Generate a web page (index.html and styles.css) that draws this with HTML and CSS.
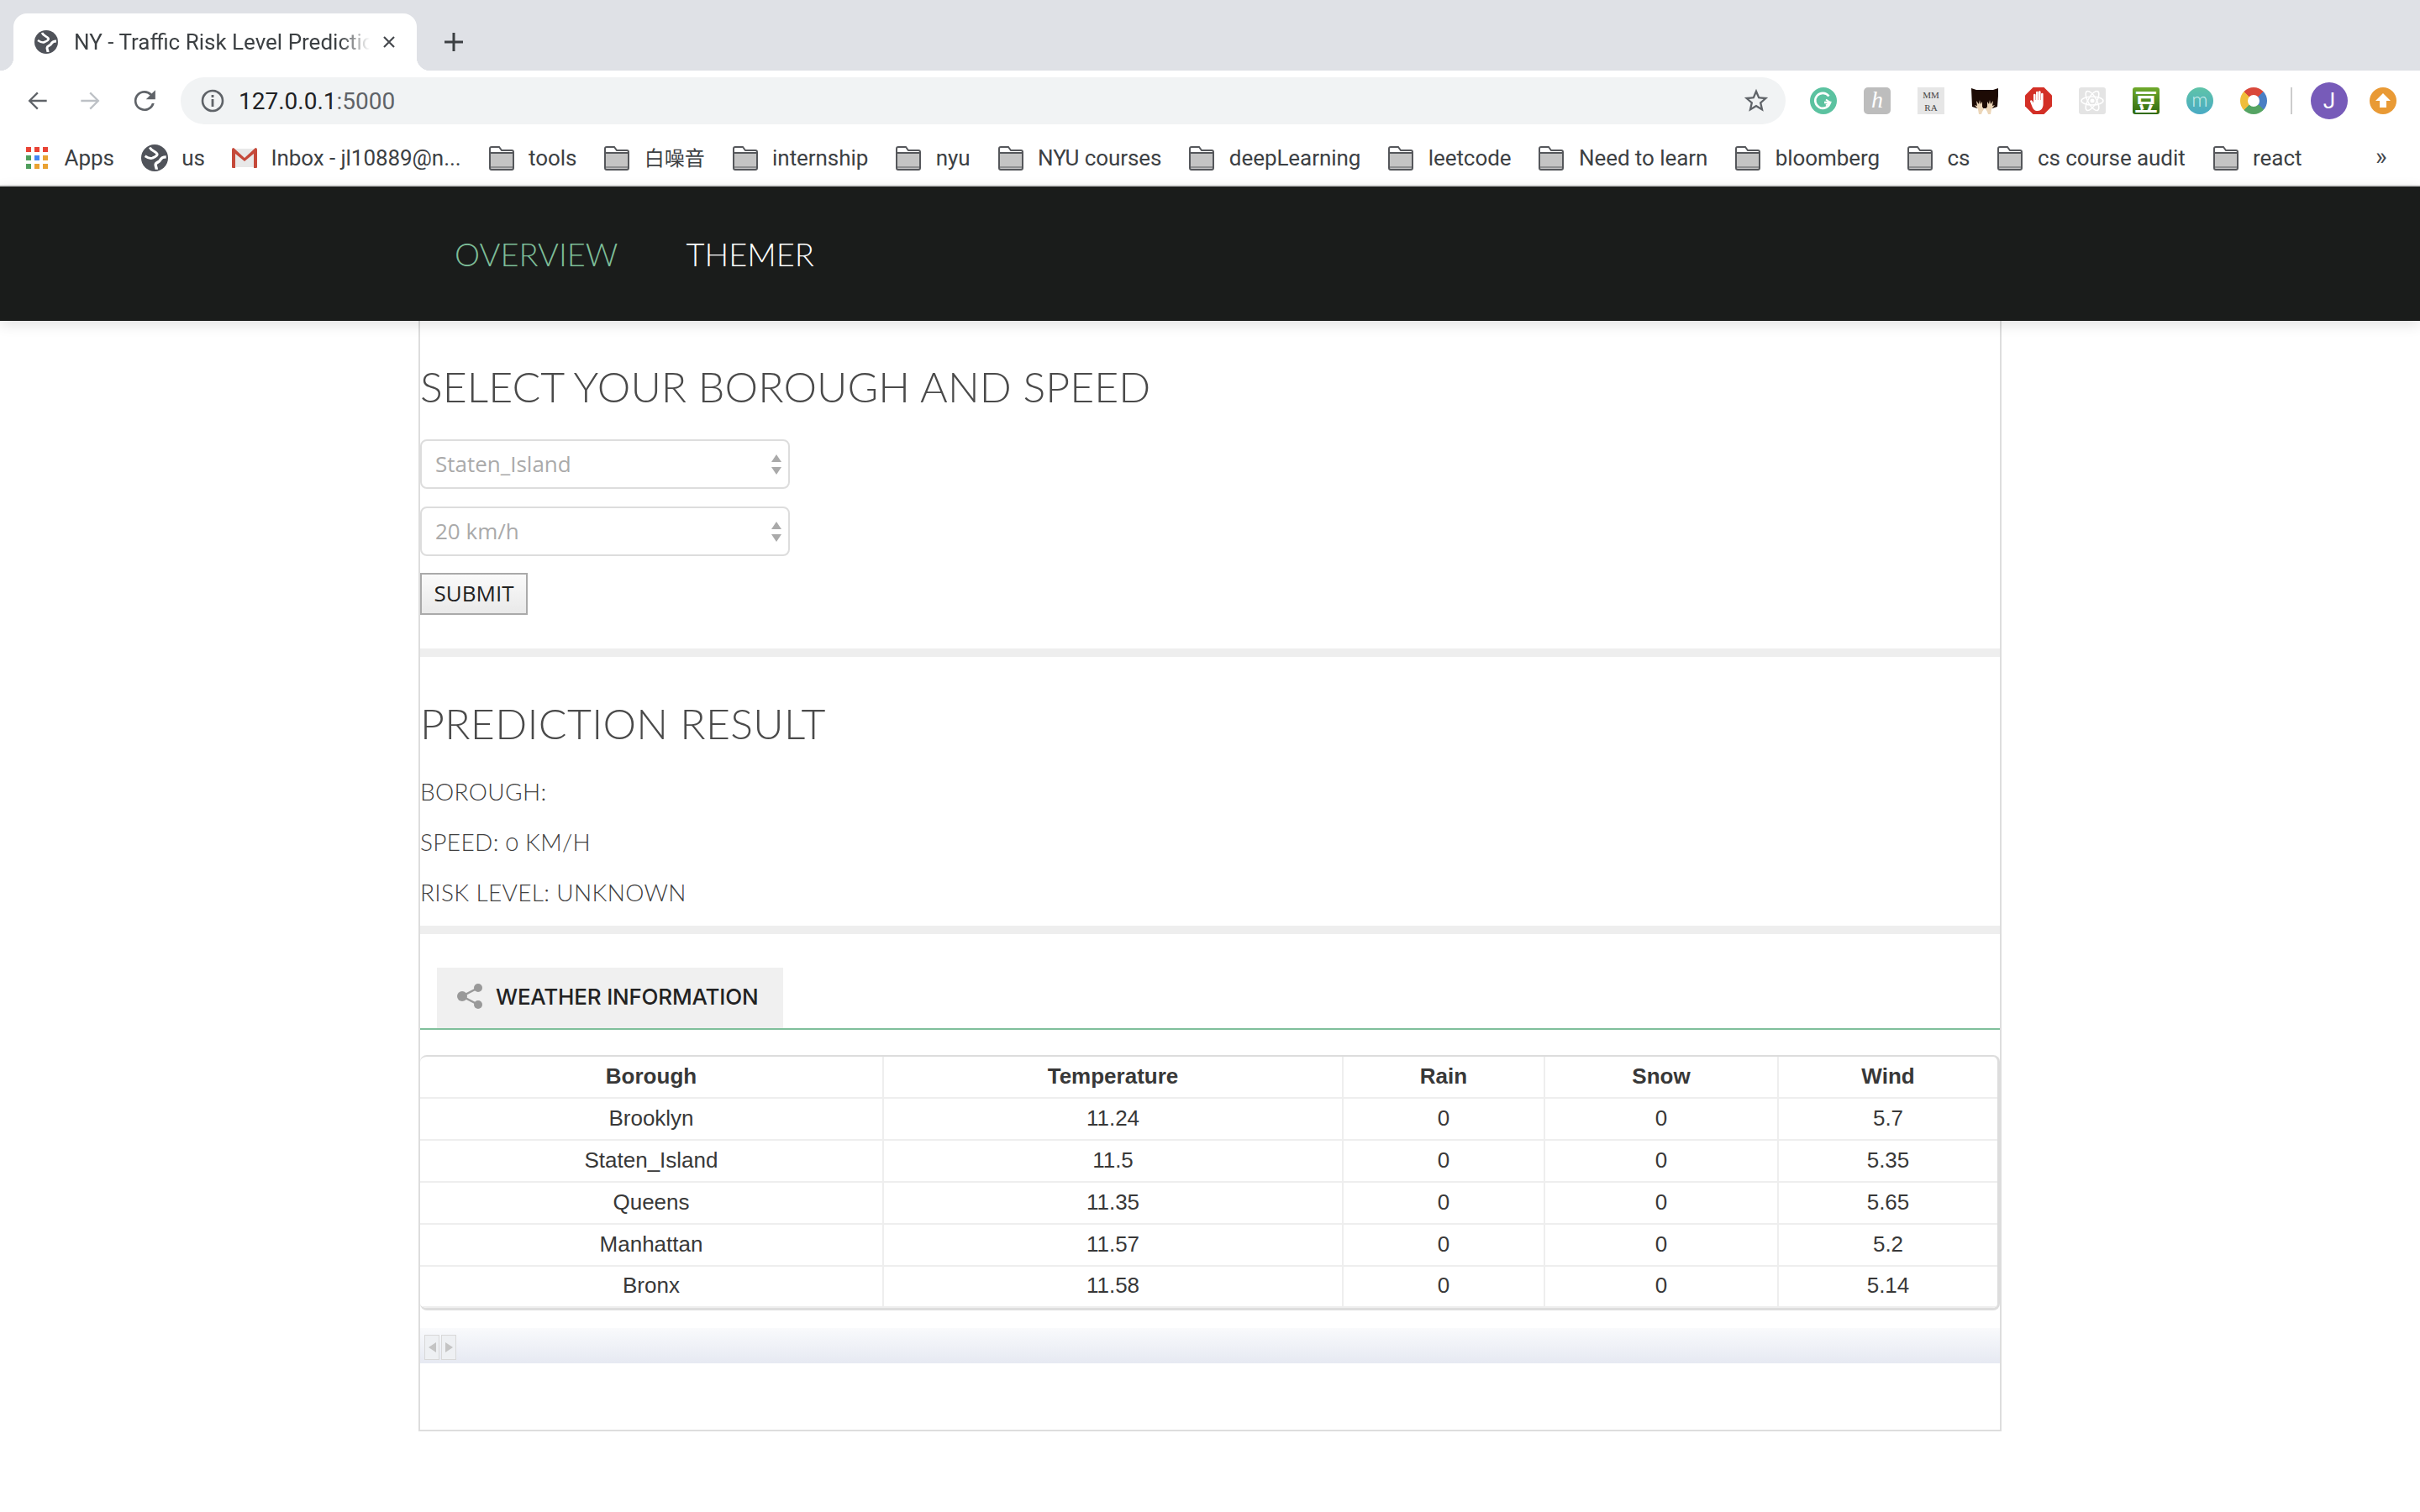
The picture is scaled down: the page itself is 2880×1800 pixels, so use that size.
FILE: index.html
```html
<!DOCTYPE html>
<html lang="en">
<head>
    <meta charset="UTF-8">
    <meta name="viewport" content="width=device-width, initial-scale=1.0">
    <title>NY - Traffic Risk Level Prediction</title>
    <link rel="stylesheet" href="styles.css">
</head>
<body>
    <svg class="defs" width="0" height="0">
        <symbol id="globe" viewBox="0 0 28 28">
            <circle cx="14" cy="14" r="14" fill="#50535a"/>
            <path d="M9 3c1 3 5 4 7 6 2 2-1 4-4 5-2 1-5 0-8-2" fill="none" stroke="#fff" stroke-width="2.6"/>
            <path d="M26 13c-3 0-5 1-6 3-1 3-5 2-5 5 0 2 1 3 1 5" fill="none" stroke="#fff" stroke-width="3"/>
        </symbol>
        <symbol id="folder" viewBox="0 0 32 32">
            <path d="M2 5q0-2 2-2h9l3 4h12q2 0 2 2v19q0 2-2 2H4q-2 0-2-2z" fill="#c4c4c4"/>
            <path d="M2 5q0-2 2-2h9l3 4h14v4H2z" fill="#fff"/>
            <path d="M2 26h28v2H2z" fill="#8e8f91"/>
            <path d="M2 5q0-2 2-2h9l3 4h12q2 0 2 2v19q0 2-2 2H4q-2 0-2-2zM2 10h28" fill="none" stroke="#55575b" stroke-width="2"/>
        </symbol>
    </svg>

    <header class="browser">
        <div class="tabstrip">
            <div class="tab">
                <svg class="tab-icon"><use href="#globe"/></svg>
                <span class="tab-title">NY - Traffic Risk Level Prediction</span>
                <svg class="tab-close" viewBox="0 0 16 16"><path d="M2 2l12 12M14 2L2 14" stroke="#45484d" stroke-width="2.2"/></svg>
            </div>
            <svg class="new-tab" viewBox="0 0 24 24"><path d="M12 1v22M1 12h22" stroke="#3c4043" stroke-width="3"/></svg>
        </div>

        <div class="toolbar">
            <svg class="nav-btn" viewBox="0 0 24 24"><path fill="#5f6368" d="M22 11H6.8l6.6-6.6L12 3l-9 9 9 9 1.4-1.4L6.8 13H22z"/></svg>
            <svg class="nav-btn" viewBox="0 0 24 24"><path fill="#bdc1c6" d="M2 11h15.2l-6.6-6.6L12 3l9 9-9 9-1.4-1.4 6.6-6.6H2z"/></svg>
            <svg class="nav-btn" viewBox="0 0 24 24"><path fill="#5f6368" d="M19.3 4.7A10.4 10.4 0 0 0 12 1.7C6.2 1.700 1.600 6.300 1.600 12S6.200 22.300 12 22.300c4.800 0 8.900-3.300 10-7.800h-2.500a8 8 0 1 1-1.900-8.100L13.500 10.500H23V1z"/></svg>
            <div class="omnibox">
                <svg class="info" viewBox="0 0 28 28"><circle cx="14" cy="14" r="12" fill="none" stroke="#5f6368" stroke-width="2.6"/><path d="M12.600 12h2.800v9h-2.800zM12.600 7h2.800v3h-2.800z" fill="#5f6368"/></svg>
                <span class="url">127.0.0.1<span class="url-port">:5000</span></span>
                <svg class="star" viewBox="0 0 24 24"><path fill="#5f6368" d="M22 9.240l-7.190-.62L12 2 9.190 8.630 2 9.240l5.460 4.730L5.820 21 12 17.270 18.180 21l-1.630-7.030L22 9.240zM12 15.400l-3.760 2.270 1-4.280-3.320-2.880 4.380-.38L12 6.100l1.710 4.040 4.380.38-3.320 2.880 1 4.280L12 15.400z"/></svg>
            </div>
            <div class="extensions">
                <svg class="ext" viewBox="0 0 32 32"><circle cx="16" cy="16" r="16" fill="#5bc2a0"/><path d="M22.500 10.500A9 9 0 1 0 24 18h-7" fill="none" stroke="#fff" stroke-width="2.600"/><path d="M19 14.500l5 3.500-5 3.500" fill="none" stroke="#fff" stroke-width="2"/></svg>
                <div class="ext ext-h">h</div>
                <div class="ext ext-mm">MM<br>RA</div>
                <svg class="ext" viewBox="0 0 32 32">
                    <path d="M0 1l6 2h20l6-2v9l-1 13-6 2H7l-6-2z" fill="#1d0b05"/>
                    <path d="M9 32l-1-6-4-5 3 1-1-6 3 4 1-5 1 5 2-3 0 6 2 3-2 3-1 3zM23 32l1-6 4-5-3 1 1-6-3 4-1-5-1 5-2-3 0 6-2 3 2 3 1 3z" fill="#ecd6b8"/>
                </svg>
                <svg class="ext" viewBox="0 0 32 32">
                    <path d="M9.500 0h13L32 9.500v13L22.500 32h-13L0 22.500v-13z" fill="#d32f26"/>
                    <path d="M10 9a1.300 1.300 0 0 1 2.600 0v6h.4V6a1.300 1.300 0 0 1 2.600 0v9h.4V5.500a1.300 1.300 0 0 1 2.600 0V15h.4V8a1.300 1.300 0 0 1 2.600 0v12c0 5-3 8-6.500 8-4 0-5.500-2-7-6l-2-5c-.5-1.500 1.500-2.500 2.400-1l1.500 2.500z" fill="#fff"/>
                </svg>
                <svg class="ext" viewBox="0 0 32 32">
                    <rect width="32" height="32" rx="3" fill="#e4e4e4"/>
                    <g fill="none" stroke="#fff" stroke-width="1.500">
                        <ellipse cx="16" cy="16" rx="13" ry="5"/>
                        <ellipse cx="16" cy="16" rx="13" ry="5" transform="rotate(60 16 16)"/>
                        <ellipse cx="16" cy="16" rx="13" ry="5" transform="rotate(120 16 16)"/>
                    </g>
                    <circle cx="16" cy="16" r="2.500" fill="#fff"/>
                </svg>
                <div class="ext ext-dou">豆</div>
                <div class="ext ext-m">m</div>
                <div class="ext ext-chrome"></div>
            </div>
            <div class="toolbar-sep"></div>
            <div class="avatar">J</div>
            <svg class="ext" viewBox="0 0 32 32"><circle cx="16" cy="16" r="16" fill="#e99a35"/><path d="M16 7l9 9h-5v8h-8v-8H7z" fill="#fff"/></svg>
        </div>

        <div class="bookmarks">
            <div class="bm">
                <svg class="bm-apps" viewBox="0 0 26 26">
                    <rect width="6" height="6" fill="#e94335"/><rect x="10" width="6" height="6" fill="#e94335"/><rect x="20" width="6" height="6" fill="#e94335"/>
                    <rect y="10" width="6" height="6" fill="#4f9e5c"/><rect x="10" y="10" width="6" height="6" fill="#4285f4"/><rect x="20" y="10" width="6" height="6" fill="#eaa233"/>
                    <rect y="20" width="6" height="6" fill="#4f9e5c"/><rect x="10" y="20" width="6" height="6" fill="#eaa233"/><rect x="20" y="20" width="6" height="6" fill="#eaa233"/>
                </svg>
                <span>Apps</span>
            </div>
            <div class="bm"><svg class="bm-icon"><use href="#globe"/></svg><span>us</span></div>
            <div class="bm">
                <svg class="bm-gmail" viewBox="0 0 30 24">
                    <path d="M1 1h28v22H1z" fill="#e8e8e8"/>
                    <path d="M0 2q0-2 2-2l13 12L28 0q2 0 2 2v21q0 1-1 1h-3V7l-11 9L4 7v17H1q-1 0-1-1z" fill="#c5493a"/>
                </svg>
                <span>Inbox - jl10889@n...</span>
            </div>
            <div class="bm"><svg class="bm-icon"><use href="#folder"/></svg><span>tools</span></div>
            <div class="bm"><svg class="bm-icon"><use href="#folder"/></svg><span class="bm-cjk">白噪音</span></div>
            <div class="bm"><svg class="bm-icon"><use href="#folder"/></svg><span>internship</span></div>
            <div class="bm"><svg class="bm-icon"><use href="#folder"/></svg><span>nyu</span></div>
            <div class="bm"><svg class="bm-icon"><use href="#folder"/></svg><span>NYU courses</span></div>
            <div class="bm"><svg class="bm-icon"><use href="#folder"/></svg><span>deepLearning</span></div>
            <div class="bm"><svg class="bm-icon"><use href="#folder"/></svg><span>leetcode</span></div>
            <div class="bm"><svg class="bm-icon"><use href="#folder"/></svg><span>Need to learn</span></div>
            <div class="bm"><svg class="bm-icon"><use href="#folder"/></svg><span>bloomberg</span></div>
            <div class="bm"><svg class="bm-icon"><use href="#folder"/></svg><span>cs</span></div>
            <div class="bm"><svg class="bm-icon"><use href="#folder"/></svg><span>cs course audit</span></div>
            <div class="bm"><svg class="bm-icon"><use href="#folder"/></svg><span>react</span></div>
            <span class="bm-more">»</span>
        </div>
    </header>

    <nav class="navbar">
        <a class="nav-link active">OVERVIEW</a>
        <a class="nav-link">THEMER</a>
    </nav>

    <main class="content">
        <section class="select-section">
            <h2>SELECT YOUR BOROUGH AND SPEED</h2>
            <div class="select-wrap">
                <select><option>Staten_Island</option></select>
                <svg class="select-arrows" viewBox="0 0 12 24"><path d="M6 0l6 9H0zM6 24L0 15h12z" fill="#aaa"/></svg>
            </div>
            <div class="select-wrap">
                <select><option>20 km/h</option></select>
                <svg class="select-arrows" viewBox="0 0 12 24"><path d="M6 0l6 9H0zM6 24L0 15h12z" fill="#aaa"/></svg>
            </div>
            <button class="submit">SUBMIT</button>
        </section>

        <section class="result-section">
            <h2>PREDICTION RESULT</h2>
            <p>BOROUGH:</p>
            <p>SPEED: 0 KM/H</p>
            <p>RISK LEVEL: UNKNOWN</p>
        </section>

        <section class="weather-section">
            <div class="tabs">
                <div class="weather-tab">
                    <svg class="share" viewBox="0 0 30 30">
                        <path d="M25 5L6 15l19 10" fill="none" stroke="#999" stroke-width="2.500"/>
                        <circle cx="25" cy="5" r="5" fill="#999"/><circle cx="6" cy="15" r="6" fill="#999"/><circle cx="25" cy="25" r="5" fill="#999"/>
                    </svg>
                    WEATHER INFORMATION
                </div>
            </div>
            <div class="table-wrap">
                <table>
                    <colgroup>
                        <col class="col-borough"><col class="col-temp"><col class="col-rain"><col class="col-snow"><col class="col-wind">
                    </colgroup>
                    <tr><th>Borough</th><th>Temperature</th><th>Rain</th><th>Snow</th><th>Wind</th></tr>
                    <tr><td>Brooklyn</td><td>11.24</td><td>0</td><td>0</td><td>5.7</td></tr>
                    <tr><td>Staten_Island</td><td>11.5</td><td>0</td><td>0</td><td>5.35</td></tr>
                    <tr><td>Queens</td><td>11.35</td><td>0</td><td>0</td><td>5.65</td></tr>
                    <tr><td>Manhattan</td><td>11.57</td><td>0</td><td>0</td><td>5.2</td></tr>
                    <tr><td>Bronx</td><td>11.58</td><td>0</td><td>0</td><td>5.14</td></tr>
                </table>
            </div>
            <div class="scrollbar">
                <div class="scroll-btns">
                    <div class="scroll-btn"><span class="tri-left"></span></div>
                    <div class="scroll-btn"><span class="tri-right"></span></div>
                </div>
            </div>
        </section>
    </main>
</body>
</html>
```

FILE: styles.css
```css
* {
    box-sizing: border-box;
}
body {
    margin: 0;
    width: 2880px;
    background: #fff;
    font-family: "Lato", sans-serif;
    color: #555;
}
.defs {
    display: block;
    height: 0;
}

/* browser chrome */
.browser {
    font-family: "Roboto", sans-serif;
    border-bottom: 2px solid #ddd;
}
.tabstrip {
    height: 84px;
    background: #dfe1e6;
    display: flex;
    align-items: flex-end;
    padding-left: 16px;
}
.tab {
    position: relative;
    width: 480px;
    height: 68px;
    background: #fff;
    border-radius: 16px 16px 0 0;
    display: flex;
    align-items: center;
    padding: 0 24px 0 25px;
}
.tab::before,
.tab::after {
    content: "";
    position: absolute;
    bottom: 0;
    width: 16px;
    height: 16px;
}
.tab::before {
    left: -16px;
    background: radial-gradient(circle at 0 0, #dfe1e6 16px, #fff 16.5px);
}
.tab::after {
    right: -16px;
    background: radial-gradient(circle at 100% 0, #dfe1e6 16px, #fff 16.5px);
}
.tab-icon {
    width: 28px;
    height: 28px;
    flex: none;
}
.tab-title {
    margin-left: 19px;
    width: 352px;
    flex: none;
    font-size: 26px;
    color: #3c4043;
    white-space: nowrap;
    overflow: hidden;
    -webkit-mask-image: linear-gradient(to right, #000 90%, transparent);
    mask-image: linear-gradient(to right, #000 90%, transparent);
}
.tab-close {
    width: 16px;
    height: 16px;
    margin-left: 15px;
    flex: none;
}
.new-tab {
    width: 24px;
    height: 24px;
    margin: 0 0 22px 32px;
}
.toolbar {
    height: 72px;
    display: flex;
    align-items: center;
    padding-left: 30px;
}
.nav-btn {
    width: 28px;
    height: 28px;
    margin-right: 36px;
    flex: none;
}
.omnibox {
    width: 1910px;
    height: 56px;
    margin-left: -7px;
    flex: none;
    background: #f1f3f4;
    border-radius: 28px;
    display: flex;
    align-items: center;
    padding: 0 18px 0 24px;
}
.info {
    width: 28px;
    height: 28px;
}
.url {
    margin-left: 17px;
    font-size: 28px;
    color: #202124;
}
.url-port {
    color: #5f6368;
}
.star {
    width: 34px;
    height: 34px;
    margin-left: auto;
}
.extensions {
    display: flex;
    gap: 32px;
    margin-left: 29px;
}
.ext {
    width: 32px;
    height: 32px;
    flex: none;
}
.ext-h {
    background: #bdbdbd;
    border-radius: 5px;
    color: #fff;
    font: italic 28px/30px "Liberation Serif", serif;
    text-align: center;
}
.ext-mm {
    background: #e6e6e6;
    color: #444;
    font: 11px/15px "Liberation Serif", serif;
    text-align: center;
    padding-top: 2px;
}
.ext-dou {
    background: linear-gradient(#6fa92c, #2f6a0e);
    border-radius: 3px;
    color: #fff;
    font: 700 28px/32px "Noto Sans CJK SC", sans-serif;
    text-align: center;
}
.ext-m {
    background: linear-gradient(#5fc4a8, #49aac4);
    border-radius: 50%;
    color: #cdeeee;
    font: 300 24px/28px "Lato", sans-serif;
    text-align: center;
}
.ext-chrome {
    border-radius: 50%;
    background: conic-gradient(#d9483b 0 45deg, #4a7fc4 45deg 130deg, #55a463 130deg 225deg, #f0bd3a 225deg 315deg, #d9483b 315deg);
    position: relative;
    filter: blur(0.6px);
}
.ext-chrome::after {
    content: "";
    position: absolute;
    inset: 9px;
    background: #fff;
    border-radius: 50%;
}
.toolbar-sep {
    width: 2px;
    height: 32px;
    background: #ccc;
    margin: 0 22px 0 28px;
    flex: none;
}
.avatar {
    width: 44px;
    height: 44px;
    margin-right: 26px;
    flex: none;
    border-radius: 50%;
    background: #775bb9;
    color: #fff;
    font: 26px/44px "Roboto", sans-serif;
    text-align: center;
}
.bookmarks {
    height: 64px;
    display: flex;
    align-items: center;
    padding-left: 31px;
    gap: 32px;
    position: relative;
}
.bm {
    display: flex;
    align-items: center;
    gap: 16.5px;
    font-size: 26px;
    color: #3c4043;
    white-space: nowrap;
}
.bm span {
    font-family: "Roboto", "Noto Sans CJK SC", sans-serif;
    letter-spacing: -0.07px;
}
.bm .bm-cjk {
    font-size: 24px;
    margin-bottom: 3px;
}
.bm-apps {
    width: 26px;
    height: 26px;
    margin-right: 3px;
}
.bm-icon {
    width: 32px;
    height: 32px;
    flex: none;
}
.bm-gmail {
    width: 30px;
    height: 24px;
}
.bm-more {
    position: absolute;
    left: 2827px;
    top: 13px;
    font-size: 29px;
    color: #45484d;
}

/* page */
.navbar {
    position: relative;
    height: 160px;
    background: #1a1c1b;
    display: flex;
    align-items: center;
    gap: 81px;
    padding-left: 541px;
    box-shadow: 0 4px 16px rgba(0, 0, 0, 0.12);
}
.nav-link {
    font-size: 38px;
    font-weight: 300;
    color: #fff;
}
.nav-link.active {
    color: #7dbd98;
}
.content {
    width: 1884px;
    margin-left: 498px;
    border: 2px solid #ddd;
    border-top: none;
}
h2 {
    margin: 0;
    font-size: 50px;
    line-height: 60px;
    font-weight: 300;
    color: #4a4a4a;
    letter-spacing: 0.06px;
}
.select-section {
    padding: 48px 0 40px;
    border-bottom: 10px solid #eee;
}
.select-section h2 {
    margin-bottom: 33px;
}
.select-wrap {
    position: relative;
    width: 440px;
    margin-bottom: 21px;
}
select {
    display: block;
    width: 440px;
    height: 59px;
    appearance: none;
    -webkit-appearance: none;
    background: #fff;
    border: 2px solid #ddd;
    border-radius: 8px;
    padding: 0 16px 2px;
    font: 26px "Open Sans", sans-serif;
    color: #aaa;
}
.select-arrows {
    position: absolute;
    right: 10px;
    top: 18px;
    width: 12px;
    height: 24px;
}
.submit {
    display: block;
    width: 128px;
    height: 50px;
    border: 2px solid #aaa;
    background: linear-gradient(#fafafa, #e9e9e9);
    font: 26px "Open Sans", sans-serif;
    color: #222;
    padding: 0 0 2px;
    margin-top: -1px;
}
.result-section {
    padding: 49px 0 10px;
    border-bottom: 10px solid #eee;
}
.result-section h2 {
    margin-bottom: 21px;
    letter-spacing: 0.3px;
}
.result-section p {
    margin: 0;
    font-size: 28px;
    line-height: 60px;
    font-weight: 300;
    color: #404040;
    letter-spacing: 0.35px;
    font-variant-numeric: oldstyle-nums;
}
.weather-section {
    padding: 40px 0 79px;
}
.tabs {
    border-bottom: 2px solid #7fbf9b;
    padding-left: 20px;
}
.weather-tab {
    width: 412px;
    height: 72px;
    background: #f0f0f0;
    display: flex;
    align-items: center;
    padding: 0 0 4px 24px;
    gap: 16px;
    font: 500 26px "Inter", sans-serif;
    letter-spacing: -0.2px;
    color: #222;
}
.share {
    width: 30px;
    height: 30px;
}
.table-wrap {
    margin-top: 30px;
    width: 1880px;
    border-top: 2px solid #ddd;
    border-right: 3px solid #ddd;
    border-bottom: 3px solid #ddd;
    border-radius: 8px;
    overflow: hidden;
}
table {
    width: 1877px;
    table-layout: fixed;
    border-spacing: 0;
    font: 26px "Liberation Sans", sans-serif;
    color: #383838;
}
.col-borough { width: 552px; }
.col-temp { width: 547px; }
.col-rain { width: 240px; }
.col-snow { width: 278px; }
.col-wind { width: 260px; }
th,
td {
    height: 50px;
    padding: 0 0 2px;
    text-align: center;
    border-right: 2px solid #eee;
    border-bottom: 2px solid #eee;
}
th:last-child,
td:last-child {
    border-right: none;
}
tr:last-child td {
    height: 49px;
}
.scrollbar {
    margin-top: 21px;
    height: 42px;
    background: linear-gradient(#f9fafc, #e6e9f2);
    padding: 8px 0 0 5px;
}
.scroll-btns {
    display: flex;
    width: 38px;
    height: 30px;
    gap: 2px;
}
.scroll-btn {
    flex: 1;
    background: #eef0f3;
    border: 1px solid #d8d8d8;
    display: flex;
    align-items: center;
    justify-content: center;
}
.tri-left {
    border: 6px solid transparent;
    border-left: none;
    border-right: 9px solid #c4c4c4;
}
.tri-right {
    border: 6px solid transparent;
    border-right: none;
    border-left: 9px solid #c4c4c4;
}
```
